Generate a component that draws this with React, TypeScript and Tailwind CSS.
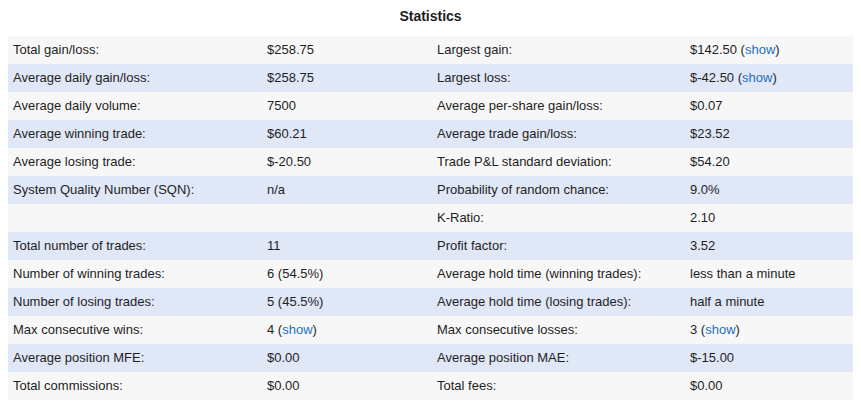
import React from "react";

type Cell = { text: string; show?: boolean };
type Row = [string, Cell, string, Cell];

const rows: Row[] = [
  ["Total gain/loss:", { text: "$258.75" }, "Largest gain:", { text: "$142.50", show: true }],
  ["Average daily gain/loss:", { text: "$258.75" }, "Largest loss:", { text: "$-42.50", show: true }],
  ["Average daily volume:", { text: "7500" }, "Average per-share gain/loss:", { text: "$0.07" }],
  ["Average winning trade:", { text: "$60.21" }, "Average trade gain/loss:", { text: "$23.52" }],
  ["Average losing trade:", { text: "$-20.50" }, "Trade P&L standard deviation:", { text: "$54.20" }],
  ["System Quality Number (SQN):", { text: "n/a" }, "Probability of random chance:", { text: "9.0%" }],
  ["", { text: "" }, "K-Ratio:", { text: "2.10" }],
  ["Total number of trades:", { text: "11" }, "Profit factor:", { text: "3.52" }],
  ["Number of winning trades:", { text: "6 (54.5%)" }, "Average hold time (winning trades):", { text: "less than a minute" }],
  ["Number of losing trades:", { text: "5 (45.5%)" }, "Average hold time (losing trades):", { text: "half a minute" }],
  ["Max consecutive wins:", { text: "4", show: true }, "Max consecutive losses:", { text: "3", show: true }],
  ["Average position MFE:", { text: "$0.00" }, "Average position MAE:", { text: "$-15.00" }],
  ["Total commissions:", { text: "$0.00" }, "Total fees:", { text: "$0.00" }],
];

const Value = ({ cell }: { cell: Cell }) => (
  <>
    {cell.text}
    {cell.show && (
      <>
        {" ("}
        <a href="#" className="text-[#1c6fc0]">show</a>
        {")"}
      </>
    )}
  </>
);

export default function App() {
  return (
    <div
      className="w-[861px] h-[411px] bg-white text-[#1e1e1e] overflow-hidden"
      style={{ fontFamily: '"Liberation Sans", Arial, sans-serif' }}
    >
      <h2 className="h-9 flex items-center justify-center text-[14px] font-bold pb-1">Statistics</h2>
      <div className="px-2">
        {rows.map((r, i) => (
          <div
            key={i}
            className={`grid grid-cols-[254px_170px_253px_169px] h-7 items-center text-[13px] ${
              i % 2 === 0 ? "bg-[#f7f7f7]" : "bg-[#e0e7f7]"
            }`}
          >
            <div className="px-[5px] whitespace-nowrap">{r[0]}</div>
            <div className="px-[5px] whitespace-nowrap"><Value cell={r[1]} /></div>
            <div className="px-[5px] whitespace-nowrap">{r[2]}</div>
            <div className="px-[5px] whitespace-nowrap"><Value cell={r[3]} /></div>
          </div>
        ))}
      </div>
    </div>
  );
}
